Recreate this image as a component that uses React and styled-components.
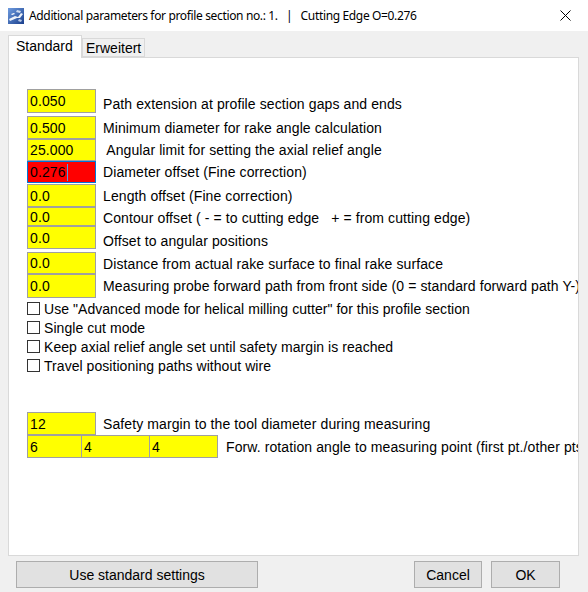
import React from "react";
import styled, { createGlobalStyle } from "styled-components";

const Global = createGlobalStyle`
  html, body { margin: 0; padding: 0; background: #f0f0f0; }
  body { width: 588px; height: 592px; overflow: hidden; }
  * { box-sizing: border-box; }
`;

const Window = styled.div`
  width: 588px;
  height: 592px;
  display: flex;
  flex-direction: column;
  background: #f0f0f0;
  font-family: "Liberation Sans", Arial, sans-serif;
  font-size: 14px;
  color: #000;
`;

const TitleBar = styled.div`
  height: 31px;
  flex: none;
  background: #fff;
  display: flex;
  align-items: center;
  padding-left: 8px;
`;

const TitleText = styled.div`
  margin-left: 5px;
  font-family: "Noto Sans", "Open Sans", sans-serif;
  font-size: 12px;
  color: #000;
  white-space: pre;
  letter-spacing: -0.35px;
`;

const CloseBtn = styled.div`
  margin-left: auto;
  width: 46px;
  height: 31px;
  display: flex;
  align-items: center;
  justify-content: center;
`;

const Body = styled.div`
  flex: 1;
  display: flex;
  flex-direction: column;
  padding: 4px 9px 0 8px;
`;

const TabStrip = styled.div`
  display: flex;
  align-items: flex-end;
  height: 23px;
  position: relative;
  z-index: 1;
  margin-bottom: -1px;
`;

const Tab = styled.div`
  height: ${(p) => (p.$active ? 23 : 19)}px;
  padding: 0 ${(p) => (p.$active ? 7 : 3)}px;
  width: ${(p) => p.$w}px;
  background: ${(p) => (p.$active ? "#fff" : "#f0f0f0")};
  border: 1px solid #d9d9d9;
  border-bottom: ${(p) => (p.$active ? "none" : "1px solid #d9d9d9")};
  margin-bottom: ${(p) => (p.$active ? 0 : 1)}px;
  display: flex;
  align-items: ${(p) => (p.$active ? "flex-start" : "center")};
  padding-top: ${(p) => (p.$active ? 2 : 1)}px;
  white-space: nowrap;
  font-size: 14px;
`;

const Panel = styled.div`
  height: 499px;
  background: #fff;
  border: 1px solid #d9d9d9;
  padding: 31px 0 0 18px;
  overflow: hidden;
  display: flex;
  flex-direction: column;
`;

const Row = styled.div`
  display: flex;
  align-items: center;
  height: ${(p) => p.$h}px;
  margin-top: ${(p) => p.$mt || 0}px;
  white-space: pre;
`;

const Field = styled.div`
  flex: none;
  width: ${(p) => p.$w || 69}px;
  height: 100%;
  background: ${(p) => (p.$error ? "#ff0000" : "#ffff00")};
  border: 1px solid ${(p) => (p.$focus ? "#0078d7" : "#a0a0a0")};
  margin-left: ${(p) => (p.$join ? -1 : 0)}px;
  padding: 0 0 0 2px;
  display: flex;
  align-items: center;
  font-size: 14px;
  letter-spacing: 0.1px;
  color: #000;
`;

const Caret = styled.span`
  display: inline-block;
  width: 1px;
  height: 17px;
  background: #4aa3e8;
  margin-left: 1px;
`;

const Label = styled.span`
  margin-left: ${(p) => p.$ml || 7}px;
  position: relative;
  top: ${(p) => p.$dy || 0}px;
  font-size: 14px;
  letter-spacing: 0.1px;
  color: #000;
  white-space: pre;
`;

const CheckRow = styled.label`
  display: flex;
  align-items: center;
  height: 19px;
  margin-top: ${(p) => p.$mt || 0}px;
  white-space: pre;
`;

const Box = styled.span`
  width: 13px;
  height: 13px;
  border: 1px solid #333;
  background: #fff;
  flex: none;
`;

const CheckText = styled.span`
  margin-left: 4px;
  font-size: 14px;
  letter-spacing: 0.05px;
`;

const ButtonBar = styled.div`
  display: flex;
  align-items: center;
  padding: 5px 19px 0 8px;
  gap: 9px;
`;

const Button = styled.button`
  height: 27px;
  width: ${(p) => p.$w}px;
  margin-left: ${(p) => (p.$push ? "auto" : 0)};
  background: #e1e1e1;
  border: 1px solid #adadad;
  font-family: "Liberation Sans", Arial, sans-serif;
  font-size: 14px;
  color: #000;
  padding: 0;
`;

const AppIcon = () => (
  <svg width="16" height="16" viewBox="0 0 16 16">
    <defs>
      <linearGradient id="ig" x1="0" y1="0" x2="1" y2="1">
        <stop offset="0" stopColor="#6f9ce0" />
        <stop offset="1" stopColor="#1a3f8c" />
      </linearGradient>
    </defs>
    <rect x="0" y="0" width="16" height="16" fill="url(#ig)" />
    <path d="M1 11 L7 8 L10 9 L13 5 L15 6 L12 10 L9 10 L2 13 Z" fill="#eef2f9" />
    <path d="M9 2 L13 3 L12 5 L8 4 Z" fill="#cfdbee" />
    <path d="M3 6 L6 5 L7 6 L4 7 Z" fill="#ffffff" />
    <path d="M11 11 L14 12 L13 14 L10 13 Z" fill="#b8c8e4" />
  </svg>
);

const CloseIcon = () => (
  <svg width="11" height="11" viewBox="0 0 11 11">
    <path d="M0.5 0.5 L10.5 10.5 M10.5 0.5 L0.5 10.5" stroke="#000" strokeWidth="1" />
  </svg>
);

const rows = [
  { v: "0.050", l: "Path extension at profile section gaps and ends", h: 24, mt: 0, dy: 3 },
  { v: "0.500", l: "Minimum diameter for rake angle calculation", h: 23, mt: 3 },
  { v: "25.000", l: " Angular limit for setting the axial relief angle", h: 22 },
  { v: "0.276", l: "Diameter offset (Fine correction)", h: 22, error: true },
  { v: "0.0", l: "Length offset (Fine correction)", h: 23, mt: 1 },
  { v: "0.0", l: "Contour offset ( - = to cutting edge   + = from cutting edge)", h: 19, dy: 1 },
  { v: "0.0", l: "Offset to angular positions", h: 23, dy: 3 },
  { v: "0.0", l: "Distance from actual rake surface to final rake surface", h: 22, mt: 3, dy: 1 },
  { v: "0.0", l: "Measuring probe forward path from front side (0 = standard forward path Y-)", h: 24 },
];

const checks = [
  'Use "Advanced mode for helical milling cutter" for this profile section',
  "Single cut mode",
  "Keep axial relief angle set until safety margin is reached",
  "Travel positioning paths without wire",
];

export default function App() {
  return (
    <Window>
      <Global />
      <TitleBar>
        <AppIcon />
        <TitleText>{"Additional parameters for profile section no.: 1.   |   Cutting Edge O=0.276"}</TitleText>
        <CloseBtn>
          <CloseIcon />
        </CloseBtn>
      </TitleBar>
      <Body>
        <TabStrip>
          <Tab $active $w={74}>Standard</Tab>
          <Tab $w={63}>Erweitert</Tab>
        </TabStrip>
        <Panel>
          {rows.map((r, i) => (
            <Row key={i} $h={r.h} $mt={r.mt}>
              <Field $error={r.error} $focus={r.error}>
                {r.v}
                {r.error && <Caret />}
              </Field>
              <Label $dy={r.dy}>{r.l}</Label>
            </Row>
          ))}
          {checks.map((c, i) => (
            <CheckRow key={i} $mt={i === 0 ? 1 : 0}>
              <Box />
              <CheckText>{c}</CheckText>
            </CheckRow>
          ))}
          <Row $h={23} $mt={37}>
            <Field>12</Field>
            <Label>Safety margin to the tool diameter during measuring</Label>
          </Row>
          <Row $h={23}>
            <Field $w={55}>6</Field>
            <Field $w={69} $join>4</Field>
            <Field $w={69} $join>4</Field>
            <Label $ml={8}>Forw. rotation angle to measuring point (first pt./other pts)</Label>
          </Row>
        </Panel>
        <ButtonBar>
          <Button $w={242}>Use standard settings</Button>
          <Button $w={68} $push>Cancel</Button>
          <Button $w={69}>OK</Button>
        </ButtonBar>
      </Body>
    </Window>
  );
}
